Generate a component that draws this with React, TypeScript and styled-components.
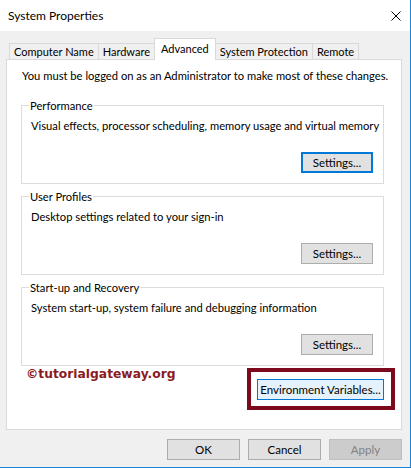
import React from 'react'
import styled, { createGlobalStyle } from 'styled-components'

const GlobalStyle = createGlobalStyle`
  html, body {
    margin: 0;
    padding: 0;
    background: #ffffff;
  }
`

/* Window frame */
const Window = styled.div`
  width: 411px;
  height: 468px;
  box-sizing: border-box;
  border-right: 1px solid #1883d7;
  border-bottom: 1px solid #1883d7;
  display: flex;
  flex-direction: column;
  background: #f0f0f0;
  font-family: Lato, 'Liberation Sans', Arial, sans-serif;
  font-size: 11.2px;
  color: #000000;
`
const TitleBar = styled.div`
  height: 31px;
  flex: none;
  background: #ffffff;
  display: flex;
  align-items: center;
  justify-content: space-between;
  padding: 0 9px 0 8px;
`
const Title = styled.span`
  font-size: 12px;
  margin-top: -1px;
`
const Body = styled.div`
  flex: 1;
  display: flex;
  flex-direction: column;
  padding: 7px 8px 0 6px;
`

/* Tabs */
const TabStrip = styled.div`
  display: flex;
  align-items: flex-end;
  height: 21px;
  padding-left: 3px;
`
const Tab = styled.div<{ $active?: boolean }>`
  box-sizing: border-box;
  height: ${(p) => (p.$active ? '22px' : '16px')};
  margin-bottom: ${(p) => (p.$active ? '-1px' : '0')};
  margin-left: -1px;
  padding: ${(p) => (p.$active ? '2px 6px 0' : '0 4px')};
  font-size: 11px;
  line-height: 15px;
  border: 1px solid #d9d9d9;
  border-bottom: none;
  background: ${(p) => (p.$active ? '#ffffff' : '#f0f0f0')};
  position: relative;
  z-index: ${(p) => (p.$active ? 2 : 0)};
  white-space: nowrap;
  &:first-child {
    margin-left: 0;
  }
`

/* Panel */
const Panel = styled.div`
  position: relative;
  box-sizing: border-box;
  height: 371px;
  background: #ffffff;
  border: 1px solid #d9d9d9;
  padding: 8px 17px 0 14px;
  display: flex;
  flex-direction: column;
`
const Intro = styled.div`
  line-height: 15px;
  padding-left: 1px;
  white-space: nowrap;
`
const Group = styled.fieldset<{ $first?: boolean }>`
  margin: ${(p) => (p.$first ? '15px' : '5px')} 0 0;
  padding: 0 10px 10px 9px;
  border: 1px solid #dcdcdc;
  min-width: 0;
`
const Legend = styled.legend`
  padding: 0 1px;
  margin-left: -2px;
  line-height: 15px;
`
const Desc = styled.div`
  margin-top: 5px;
  line-height: 15px;
  white-space: nowrap;
`
const ButtonRow = styled.div<{ $top: number }>`
  display: flex;
  justify-content: flex-end;
  gap: 8px;
  margin-top: ${(p) => p.$top}px;
`
const Button = styled.button<{ $variant?: 'focus' | 'hover' | 'disabled'; $width?: number }>`
  box-sizing: border-box;
  width: ${(p) => p.$width ?? 72}px;
  height: 21px;
  padding: 0;
  font-family: inherit;
  font-size: 11.5px;
  white-space: nowrap;
  color: ${(p) => (p.$variant === 'disabled' ? '#838383' : '#000000')};
  background: ${(p) =>
    p.$variant === 'hover' ? '#e5f1fb' : p.$variant === 'disabled' ? '#cccccc' : '#e1e1e1'};
  border: ${(p) =>
    p.$variant === 'focus'
      ? '2px solid #0078d7'
      : p.$variant === 'hover'
      ? '1px solid #0078d7'
      : p.$variant === 'disabled'
      ? '1px solid #bfbfbf'
      : '1px solid #adadad'};
`

/* Annotations laid over the screenshot */
const Watermark = styled.div`
  position: absolute;
  left: 19px;
  top: 306px;
  font-family: 'DejaVu Sans', Verdana, sans-serif;
  font-weight: bold;
  font-size: 12.3px;
  line-height: 16px;
  color: #8b1a1f;
`
const HighlightWrap = styled.div`
  position: relative;
`
const Highlight = styled.div`
  position: absolute;
  top: -11px;
  left: -10px;
  right: -11px;
  bottom: -10px;
  border: 4px solid #7d0a1c;
`

const Footer = styled.div`
  margin-top: 9px;
  display: flex;
  justify-content: flex-end;
  gap: 8px;
`

const CloseIcon = () => (
  <svg width="10" height="10" viewBox="0 0 10 10">
    <path d="M0.5 0.5 L9.5 9.5 M9.5 0.5 L0.5 9.5" stroke="#000" strokeWidth="1" />
  </svg>
)

const groups = [
  { title: 'Performance', text: 'Visual effects, processor scheduling, memory usage and virtual memory', focus: true },
  { title: 'User Profiles', text: 'Desktop settings related to your sign-in' },
  { title: 'Start-up and Recovery', text: 'System start-up, system failure and debugging information' },
]

const tabs = ['Computer Name', 'Hardware', 'Advanced', 'System Protection', 'Remote']

export default function App() {
  return (
    <>
      <GlobalStyle />
      <Window>
        <TitleBar>
          <Title>System Properties</Title>
          <CloseIcon />
        </TitleBar>
        <Body>
          <TabStrip>
            {tabs.map((t) => (
              <Tab key={t} $active={t === 'Advanced'}>
                {t}
              </Tab>
            ))}
          </TabStrip>
          <Panel>
            <Intro>You must be logged on as an Administrator to make most of these changes.</Intro>
            {groups.map((g, i) => (
              <Group key={g.title} $first={i === 0}>
                <Legend>{g.title}</Legend>
                <Desc>{g.text}</Desc>
                <ButtonRow $top={19}>
                  <Button $variant={g.focus ? 'focus' : undefined}>Settings...</Button>
                </ButtonRow>
              </Group>
            ))}
            <ButtonRow $top={13}>
              <HighlightWrap>
                <Button $variant="hover" $width={127}>
                  Environment Variables...
                </Button>
                <Highlight />
              </HighlightWrap>
            </ButtonRow>
            <Watermark>©tutorialgateway.org</Watermark>
          </Panel>
          <Footer>
            <Button $width={73}>OK</Button>
            <Button $width={73}>Cancel</Button>
            <Button $width={73} $variant="disabled">
              Apply
            </Button>
          </Footer>
        </Body>
      </Window>
    </>
  )
}
